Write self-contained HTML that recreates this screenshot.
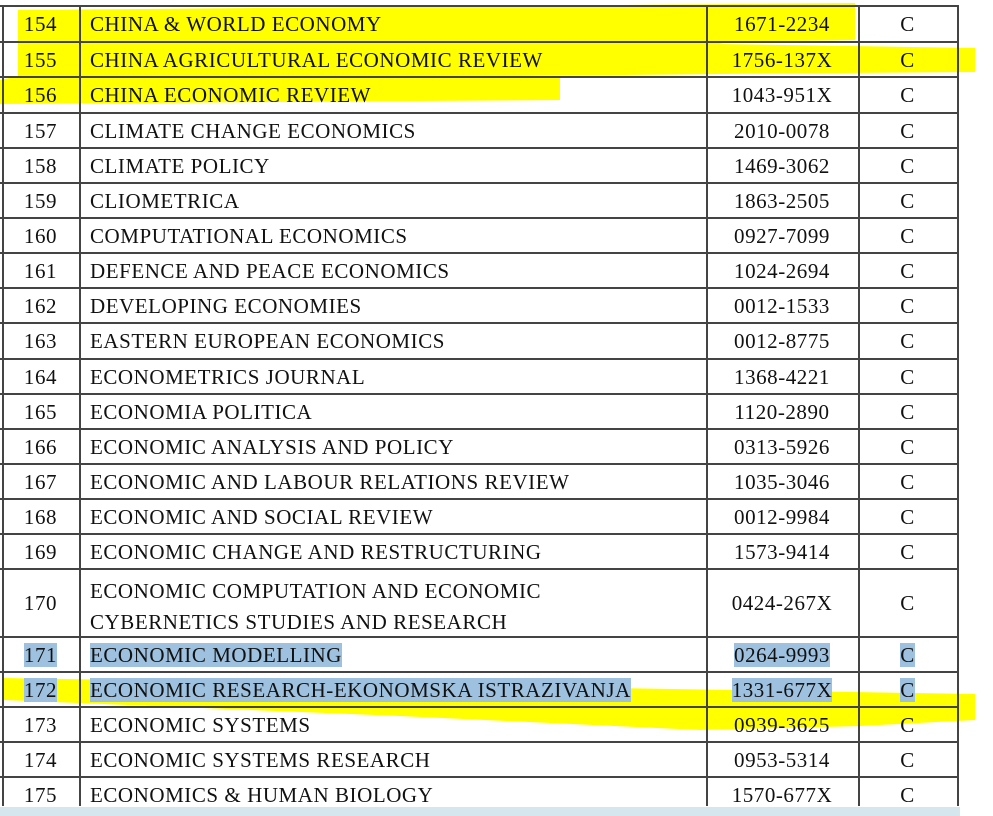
<!DOCTYPE html>
<html><head><style>
html,body{margin:0;padding:0;background:#fff;width:993px;height:816px;overflow:hidden;position:relative}
.t{position:absolute;font-family:"Liberation Serif",serif;font-size:21px;letter-spacing:0.55px;color:#111;line-height:22px;white-space:nowrap}
.n{width:77px;left:2px;text-align:center}
.i{left:706px;width:152px;text-align:center}
.c{left:858px;width:99px;text-align:center}
.h{left:90px}
.hl{position:absolute;left:0;width:993px;height:1.5px;background:#444}
.vl{position:absolute;top:5px;width:1.5px;height:801px;background:#444}
.sel{background:#9dc1de}
</style></head><body>
<svg style="position:absolute;left:0;top:0" width="993" height="816">
<polygon fill="#ffff00" points="18,10 855,3 855,40 730,42 720,44 975,48 975,72 720,74 330,78 18,78"/>
<polygon fill="#ffff00" points="0,80 18,76 560,76 560,100 0,104"/>
<polygon fill="#ffff00" points="4,678 975,694 975,720 860,726 700,730 400,716 4,700"/>
</svg>
<div class="hl" style="top:5px;width:958px"></div>
<div id="rows"></div>
<script>
var data=[["154","CHINA &amp; WORLD ECONOMY","1671-2234"],["155","CHINA AGRICULTURAL ECONOMIC REVIEW","1756-137X"],["156","CHINA ECONOMIC REVIEW","1043-951X"],["157","CLIMATE CHANGE ECONOMICS","2010-0078"],["158","CLIMATE POLICY","1469-3062"],["159","CLIOMETRICA","1863-2505"],["160","COMPUTATIONAL ECONOMICS","0927-7099"],["161","DEFENCE AND PEACE ECONOMICS","1024-2694"],["162","DEVELOPING ECONOMIES","0012-1533"],["163","EASTERN EUROPEAN ECONOMICS","0012-8775"],["164","ECONOMETRICS JOURNAL","1368-4221"],["165","ECONOMIA POLITICA","1120-2890"],["166","ECONOMIC ANALYSIS AND POLICY","0313-5926"],["167","ECONOMIC AND LABOUR RELATIONS REVIEW","1035-3046"],["168","ECONOMIC AND SOCIAL REVIEW","0012-9984"],["169","ECONOMIC CHANGE AND RESTRUCTURING","1573-9414"],["170","ECONOMIC COMPUTATION AND ECONOMIC<br>CYBERNETICS STUDIES AND RESEARCH","0424-267X"],["171","<span class=sel>ECONOMIC MODELLING</span>","<span class=sel>0264-9993</span>"],["172","<span class=sel>ECONOMIC RESEARCH-EKONOMSKA ISTRAZIVANJA</span>","<span class=sel>1331-677X</span>"],["173","ECONOMIC SYSTEMS","0939-3625"],["174","ECONOMIC SYSTEMS RESEARCH","0953-5314"],["175","ECONOMICS &amp; HUMAN BIOLOGY","1570-677X"]];
var tops=[5,41,76,112,147,182,217,252,287,322,358,393,428,463,498,533,568,636,671,706,741,776,812];
var h="";
for(var k=0;k<data.length;k++){var a=tops[k],b=tops[k+1],m=(a+b)/2+1;
var two=data[k][0]=="170";
var sc=(data[k][0]=="171"||data[k][0]=="172");
h+='<div class="t n" style="top:'+(m-11)+'px">'+(sc?'<span class=sel>'+data[k][0]+'</span>':data[k][0])+'</div>';
h+='<div class="t h" style="top:'+(two?m-27:m-11)+'px;'+(two?'line-height:31px':'')+'">'+data[k][1]+'</div>';
h+='<div class="t i" style="top:'+(m-11)+'px">'+data[k][2]+'</div>';
h+='<div class="t c" style="top:'+(m-11)+'px">'+(sc?'<span class=sel>C</span>':'C')+'</div>';
if(k<data.length-1)h+='<div class="hl" style="top:'+b+'px;width:958px"></div>';}
document.getElementById("rows").innerHTML=h;
</script>
<div class="vl" style="left:2px"></div>
<div class="vl" style="left:79px"></div>
<div class="vl" style="left:706px"></div>
<div class="vl" style="left:858px"></div>
<div class="vl" style="left:957px"></div>
<div style="position:absolute;left:0;top:807px;width:960px;height:9px;background:#d5e6ee"></div>
</body></html>
